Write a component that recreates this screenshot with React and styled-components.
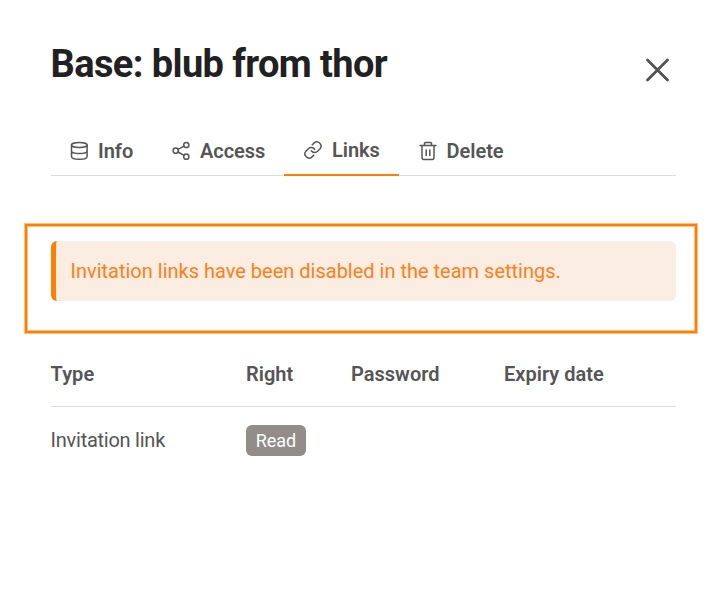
import React from "react";
import styled, { createGlobalStyle } from "styled-components";

const GlobalStyle = createGlobalStyle`
  * { box-sizing: border-box; }
  body { margin: 0; background: #fff; font-family: Roboto, sans-serif; color: #555; overflow: hidden; }
`;

const Dialog = styled.main`
  width: 712px;
  height: 603px;
  padding: 0 15px 0 25px;
  display: flex;
  flex-direction: column;
`;

const Header = styled.header`
  height: 123px;
  padding: 40px 19px 0 25.5px;
  display: flex;
  justify-content: space-between;
  align-items: flex-start;
`;

const Title = styled.h1`
  margin: 0;
  font-size: 38px;
  line-height: 48px;
  font-weight: 700;
  letter-spacing: -0.6px;
  color: #212121;
  white-space: nowrap;
`;

const CloseButton = styled.button`
  margin: 14px 0 0;
  width: 40px;
  height: 32px;
  padding: 4px;
  border: 0;
  background: none;
  color: #505352;
`;

const Tabs = styled.nav`
  display: flex;
  height: 53px;
  margin: 0 21px 0 26px;
  border-bottom: 1px solid #dcdcdc;
`;

const Tab = styled.button`
  flex: 0 0 ${(p) => p.$width}px;
  height: 53px;
  padding: 2px 0 0 ${(p) => p.$inset}px;
  border: 0;
  border-bottom: ${(p) => (p.$active ? "2px solid #ff8000" : "0")};
  background: none;
  display: flex;
  align-items: center;
  gap: 9px;
  font: 600 20px/24px Roboto, sans-serif;
  letter-spacing: -0.03px;
  color: #555;
  white-space: nowrap;
`;

const NoticeFrame = styled.section`
  margin-top: 48px;
  height: 109px;
  width: 672px;
  border: 2px solid #ff8000;
  box-shadow: 0 0 0 1px rgba(255, 128, 0, 0.5), inset 0 0 0 1px rgba(255, 128, 0, 0.5);
  padding: 15px 19px 0 24px;
`;

const Notice = styled.div`
  height: 60px;
  border-left: 5px solid #ff8000;
  border-radius: 6px;
  background: #fbede1;
  padding-left: 14.5px;
  font-size: 20px;
  line-height: 60px;
  color: #ff7f1a;
  white-space: nowrap;
`;

const Table = styled.section`
  margin: 10px 21px 0 25.6px;
`;

const Row = styled.div`
  display: grid;
  grid-template-columns: 195.4px 105px 153px 1fr;
  align-items: center;
  height: ${(p) => (p.$head ? 64 : 66)}px;
  padding-bottom: ${(p) => (p.$head ? 2 : 0)}px;
  border-bottom: ${(p) => (p.$head ? "1px solid #dcdcdc" : "0")};
  font-size: 20px;
  font-weight: ${(p) => (p.$head ? 600 : 400)};
  letter-spacing: ${(p) => (p.$head ? 0.02 : -0.25)}px;
`;

const Badge = styled.span`
  display: block;
  width: 60px;
  height: 31px;
  border-radius: 6px;
  background: #938d89;
  color: #fff;
  font-size: 18px;
  line-height: 31px;
  letter-spacing: 0;
  text-align: center;
`;

const Icon = styled.svg`
  display: block;
  flex: none;
  fill: none;
  stroke: currentColor;
  stroke-width: ${(p) => p.$stroke || 1.5};
  stroke-linecap: round;
  stroke-linejoin: round;
`;

const icons = {
  info: <><ellipse cx="10.3" cy="4" rx="7.8" ry="2.5" /><path d="M2.5 4v11.5c0 1.6 3.5 2.8 7.8 2.8s7.8-1.2 7.8-2.8V4M2.5 9.7c0 1.6 3.5 2.8 7.8 2.8s7.8-1.2 7.8-2.8" /></>,
  access: <><circle cx="4.7" cy="9.7" r="2.6" /><circle cx="15.3" cy="4" r="2.6" /><circle cx="15.3" cy="15.7" r="2.6" /><path d="M7 8.4l6-3.2M7 11l6 3.4" /></>,
  links: <><path d="M8.3 10.8a4.2 4.2 0 0 0 6.3.5l2.5-2.5a4.2 4.2 0 0 0-5.9-5.9L9.3 4.8M11.7 9.2a4.2 4.2 0 0 0-6.3-.5l-2.5 2.5a4.2 4.2 0 0 0 5.9 5.9l1.9-1.9" /></>,
  delete: <><path d="M2 4.5h16M6.5 4.5V2.5a1 1 0 0 1 1-1h5a1 1 0 0 1 1 1v2M4 4.5v12a2 2 0 0 0 2 2h8a2 2 0 0 0 2-2v-12M8.2 9v5.5M11.8 9v5.5" /></>,
};

const tabs = [
  { id: "info", label: "Info", width: 102, inset: 18 },
  { id: "access", label: "Access", width: 131, inset: 18 },
  { id: "links", label: "Links", width: 115, inset: 19, active: true },
  { id: "delete", label: "Delete", width: 125, inset: 18.5 },
];

export default function App() {
  return (
    <>
      <GlobalStyle />
      <Dialog>
        <Header>
          <Title>Base: blub from thor</Title>
          <CloseButton aria-label="Close">
            <Icon width="32" height="24" viewBox="0 0 32 24" $stroke={2.8}><path d="M5.5 2l20 20M25.5 2l-20 20" /></Icon>
          </CloseButton>
        </Header>
        <Tabs>
          {tabs.map((t) => (
            <Tab key={t.id} $width={t.width} $inset={t.inset} $active={t.active}>
              <Icon width="20" height="20" viewBox="0 0 20 20">{icons[t.id]}</Icon>
              {t.label}
            </Tab>
          ))}
        </Tabs>
        <NoticeFrame>
          <Notice>Invitation links have been disabled in the team settings.</Notice>
        </NoticeFrame>
        <Table>
          <Row $head>
            <span>Type</span><span>Right</span><span>Password</span><span>Expiry date</span>
          </Row>
          <Row>
            <span>Invitation link</span><Badge>Read</Badge>
          </Row>
        </Table>
      </Dialog>
    </>
  );
}
